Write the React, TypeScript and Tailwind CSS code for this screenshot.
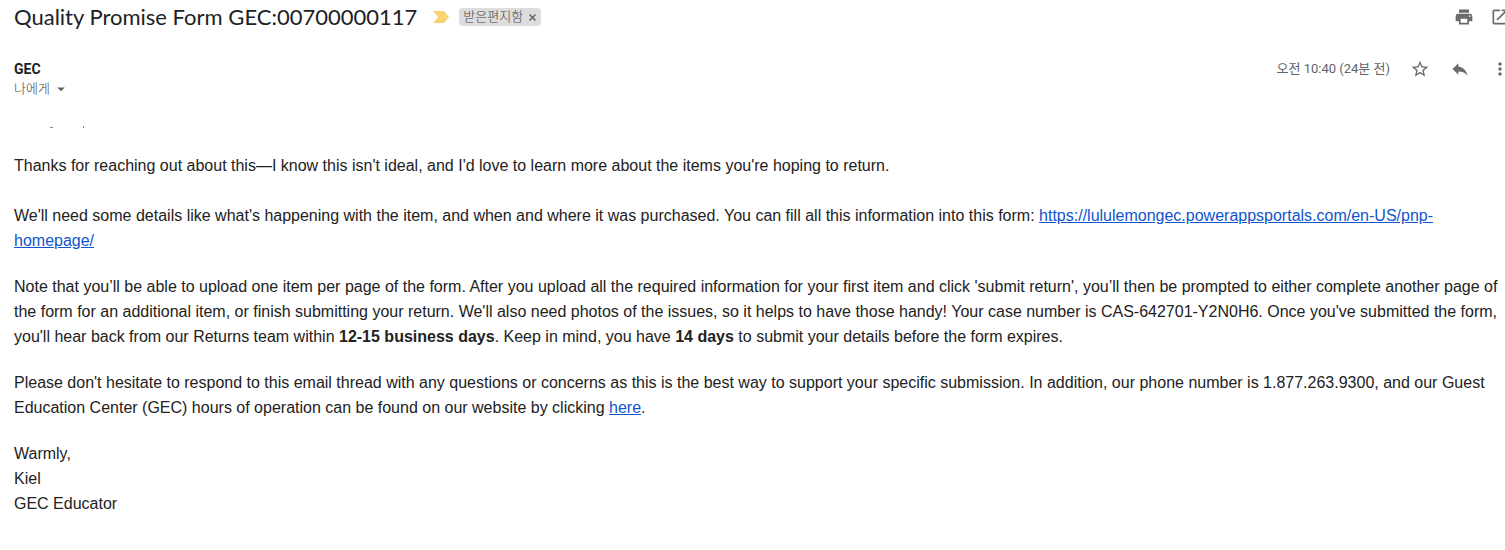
import React from 'react';
import {
  MdArrowDropDown,
  MdMoreVert,
  MdOpenInNew,
  MdPrint,
  MdReply,
  MdStarBorder,
} from 'react-icons/md';

type IconButtonProps = {
  label: string;
  children: React.ReactNode;
};

const IconButton = ({ label, children }: IconButtonProps) => (
  <button
    type="button"
    aria-label={label}
    className="shrink-0 text-xl text-[#6b6b6b]"
  >
    {children}
  </button>
);

const Subject = () => (
  <header className="flex items-center justify-between pt-[3px]">
    <div className="flex items-center">
      <h1 className="font-['Lato',sans-serif] text-[22px] leading-7 text-[#202124]">
        Quality Promise Form GEC:00700000117
      </h1>
      <button type="button" aria-label="중요" className="ml-4">
        <svg width="16" height="12" viewBox="0 0 16 12" fill="#f9d371">
          <path d="M0 0H11L16 6L11 12H0L5 6Z" />
        </svg>
      </button>
      <span className="ml-2.5 flex h-[18px] items-center gap-1.5 rounded bg-[#ddd] px-1 text-[13px] leading-4 font-light text-[#444]">
        받은편지함
        <button type="button" aria-label="라벨 삭제" className="w-2">
          <svg
            width="7"
            height="7"
            viewBox="0 0 7 7"
            stroke="#666"
            strokeWidth="1.5"
          >
            <path d="M0.5 0.5L6.5 6.5M6.5 0.5L0.5 6.5" />
          </svg>
        </button>
      </span>
    </div>
    <div className="-mr-3 flex gap-4">
      <IconButton label="모두 인쇄">
        <MdPrint />
      </IconButton>
      <IconButton label="새 창에서 열기">
        <MdOpenInNew />
      </IconButton>
    </div>
  </header>
);

const Sender = () => (
  <div className="mt-7 flex items-start justify-between">
    <div>
      <div className="font-['Roboto',sans-serif] text-sm leading-5 font-bold text-[#202124]">
        GEC
      </div>
      <button
        type="button"
        className="flex items-center gap-0.5 text-[13px] leading-5 font-light text-[#444]"
      >
        나에게
        <MdArrowDropDown className="text-lg text-[#5f6368]" />
      </button>
    </div>
    <div className="-mr-3 flex items-center gap-5">
      <time className="text-[13px] leading-5 text-[#5f6368]">
        오전 10:40 (24분 전)
      </time>
      <IconButton label="별표">
        <MdStarBorder />
      </IconButton>
      <IconButton label="답장">
        <MdReply />
      </IconButton>
      <IconButton label="더보기">
        <MdMoreVert />
      </IconButton>
    </div>
  </div>
);

const Message = () => (
  <article className="font-['Liberation_Sans',Arial,sans-serif] text-base leading-[25px] text-[#222]">
    {/* tails of the greeting line */}
    <svg
      aria-hidden="true"
      className="mt-[26px] mb-6"
      width="90"
      height="4"
      viewBox="0 0 90 4"
      fill="#888"
    >
      <path d="M36 2H39V3H36ZM69 1H70V3H69Z" />
    </svg>
    <p className="mb-[25px]">
      Thanks for reaching out about this—I know this isn&apos;t ideal, and
      I&apos;d love to learn more about the items you&apos;re hoping to return.
    </p>
    <p className="mb-[21px]">
      We&apos;ll need some details like what&apos;s happening with the item, and
      when and where it was purchased. You can fill all this information into
      this form:{' '}
      <a
        href="https://lululemongec.powerappsportals.com/en-US/pnp-homepage/"
        className="text-[#1155cc] underline"
      >
        https://lululemongec.powerappsportals.com/en-US/pnp-homepage/
      </a>
    </p>
    <p className="mb-[21px]">
      Note that you’ll be able to upload one item per page of the form. After
      you upload all the required information for your first item and click
      &apos;submit return&apos;, you’ll then be prompted to either complete
      another page of the form for an additional item, or finish submitting your
      return. We&apos;ll also need photos of the issues, so it helps to have
      those handy! Your case number is CAS-642701-Y2N0H6. Once you&apos;ve
      submitted the form, you&apos;ll hear back from our Returns team within{' '}
      <b>12-15 business days</b>. Keep in mind, you have <b>14 days</b> to
      submit your details before the form expires.
    </p>
    <p className="mb-[21px]">
      Please don&apos;t hesitate to respond to this email thread with any
      questions or concerns as this is the best way to support your specific
      submission. In addition, our phone number is 1.877.263.9300, and our Guest
      Education Center (GEC) hours of operation can be found on our website by
      clicking{' '}
      <a href="#here" className="text-[#1155cc] underline">
        here
      </a>
      .
    </p>
    <p>
      Warmly,
      <br />
      Kiel
      <br />
      GEC Educator
    </p>
  </article>
);

const App = () => (
  <main className="overflow-hidden bg-white pr-[7px] pl-3.5 font-['Roboto','Noto_Sans_CJK_KR',sans-serif]">
    <Subject />
    <Sender />
    <Message />
  </main>
);

export default App;
